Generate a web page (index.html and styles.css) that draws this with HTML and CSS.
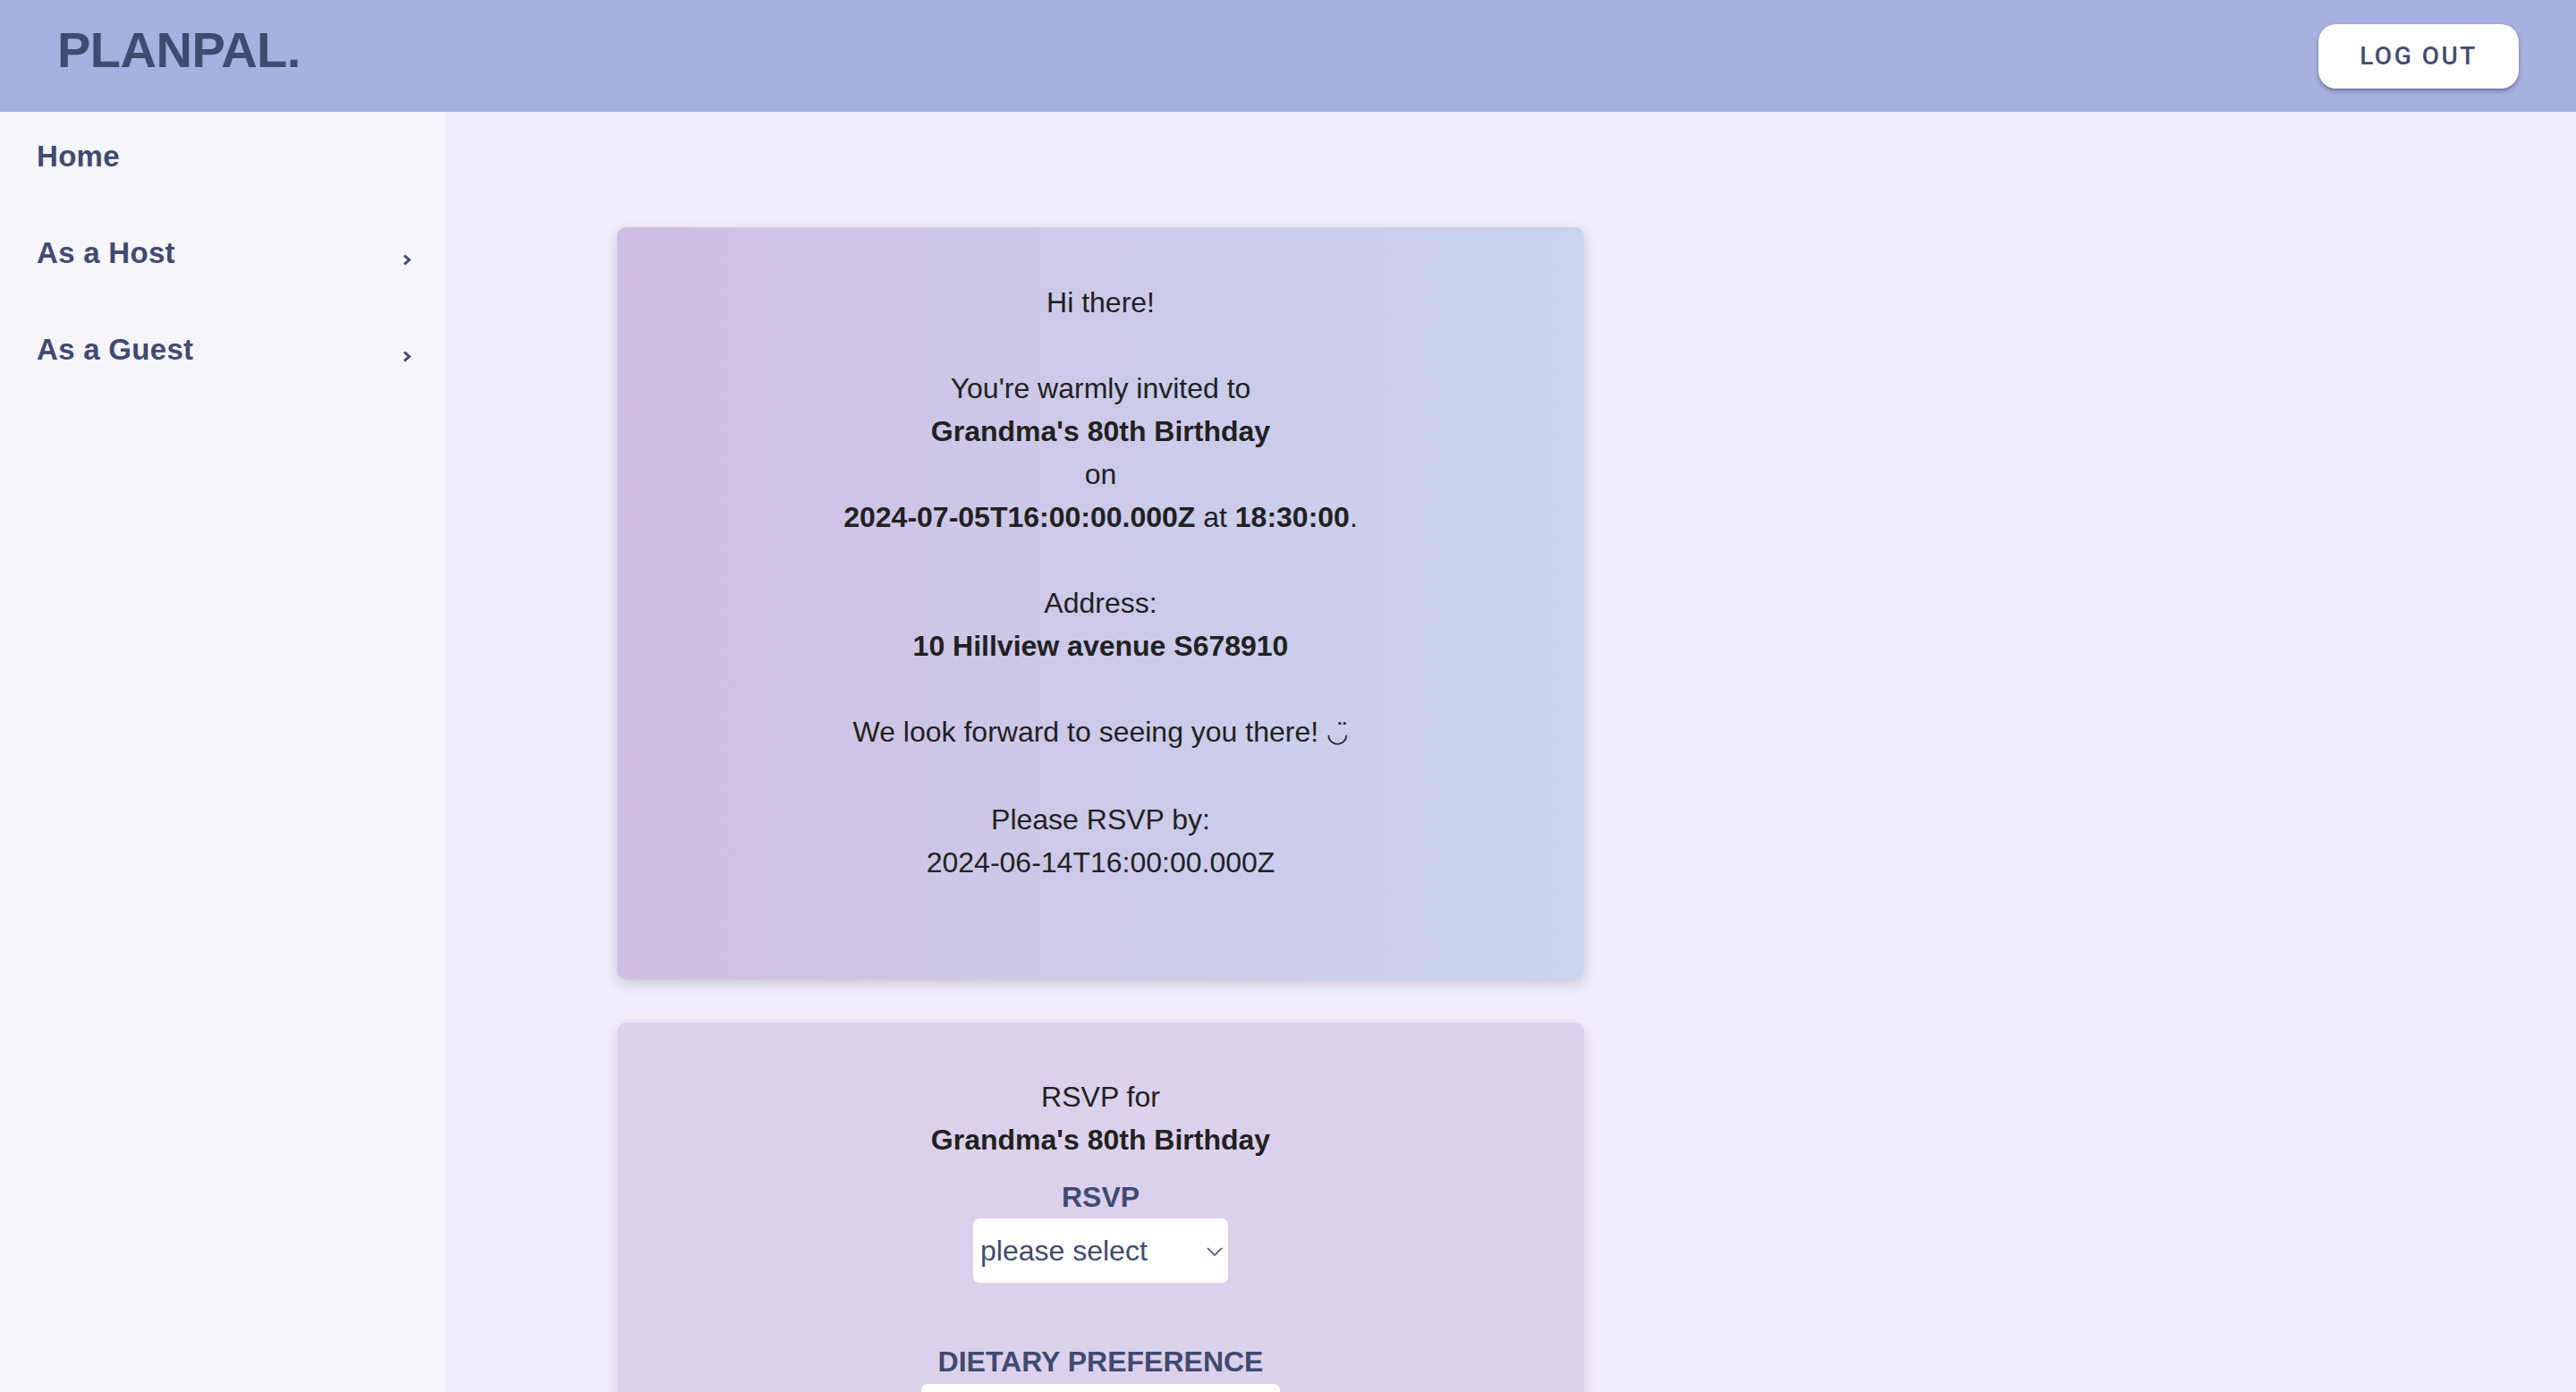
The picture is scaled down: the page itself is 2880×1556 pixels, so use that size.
FILE: index.html
```html
<!DOCTYPE html>
<html lang="en">
<head>
<meta charset="utf-8">
<title>PlanPal</title>
<link rel="stylesheet" href="styles.css">
</head>
<body>
<header class="topbar">
  <div class="logo">PLANPAL.</div>
  <button class="logout">LOG OUT</button>
</header>
<div class="layout">
  <nav class="sidebar">
    <a class="nav-item">Home</a>
    <a class="nav-item">As a Host
      <svg class="chev" width="10" height="13" viewBox="0 0 10 13"><path d="M2 1.5 L7.5 6.5 L2 11.5" fill="none" stroke="#414a70" stroke-width="3"/></svg>
    </a>
    <a class="nav-item">As a Guest
      <svg class="chev" width="10" height="13" viewBox="0 0 10 13"><path d="M2 1.5 L7.5 6.5 L2 11.5" fill="none" stroke="#414a70" stroke-width="3"/></svg>
    </a>
  </nav>
  <main class="main">
    <section class="card invite">
      <p>Hi there!</p>
      <p>You're warmly invited to<br><b>Grandma's 80th Birthday</b><br>on<br><b>2024-07-05T16:00:00.000Z</b> at <b>18:30:00</b>.</p>
      <p>Address:<br><b>10 Hillview avenue S678910</b></p>
      <p>We look forward to seeing you there! <span class="smile">◡̈</span></p>
      <p>Please RSVP by:<br>2024-06-14T16:00:00.000Z</p>
    </section>
    <section class="card rsvp">
      <div class="rsvp-head">RSVP for<br><b>Grandma's 80th Birthday</b></div>
      <label class="field-label rsvp-label">RSVP</label>
      <div class="select-wrap">
        <select class="select"><option>please select</option><option>Attending</option><option>Not attending</option></select>
        <svg class="select-chev" width="18" height="10" viewBox="0 0 18 10"><path d="M1 1 L9 9 L17 1" fill="none" stroke="#414a70" stroke-width="1.6"/></svg>
      </div>
      <label class="field-label diet-label">DIETARY PREFERENCE</label>
      <div class="text-input"></div>
    </section>
  </main>
</div>
</body>
</html>
```
FILE: styles.css
```css
html, body {
  margin: 0;
  padding: 0;
  height: 100%;
  overflow: hidden;
}
body {
  font-family: "Liberation Sans", Arial, Helvetica, sans-serif;
  background: #f0ecfa;
  color: #212121;
}
.topbar {
  height: 125px;
  background: #a7b0de;
  display: flex;
  align-items: center;
  justify-content: space-between;
  padding: 0 64px;
  box-sizing: border-box;
}
.logo {
  font-size: 56px;
  line-height: 56px;
  font-weight: 700;
  color: #414a70;
  margin-bottom: 14px;
  letter-spacing: -0.5px;
}
.logout {
  width: 224px;
  height: 72px;
  border: none;
  border-radius: 20px;
  background: #ffffff;
  color: #414a70;
  font-family: Roboto, "Liberation Sans", sans-serif;
  font-weight: 500;
  font-size: 28px;
  letter-spacing: 2.5px;
  box-shadow: 0 3px 5px rgba(40, 44, 90, 0.35), 0 1px 2px rgba(0,0,0,0.15);
  padding: 0;
  cursor: pointer;
}
.layout {
  display: flex;
  height: calc(100vh - 125px);
}
.sidebar {
  width: 498px;
  flex: none;
  background: #f6f5fa;
  display: flex;
  flex-direction: column;
}
.nav-item {
  display: flex;
  align-items: center;
  justify-content: space-between;
  padding: 26px 38px 34px 41px;
  font-size: 33px;
  line-height: 48px;
  font-weight: 700;
  color: #414a70;
  letter-spacing: 0.3px;
}
.chev {
  margin-top: 14px;
}
.main {
  flex: 1;
  background: #f0ecfa;
  padding: 129px 0 0 192px;
  box-sizing: border-box;
}
.card {
  width: 1081px;
  box-sizing: border-box;
  border-radius: 10px;
  text-align: center;
  font-size: 32px;
  line-height: 48px;
}
.invite {
  background: linear-gradient(to right, #d0bfe3, #c9d4ef);
  box-shadow: 0 5px 14px rgba(60, 50, 90, 0.2);
  padding: 60px 20px 107px;
}
.invite p {
  margin: 48px 0 0;
}
.invite p:first-child {
  margin-top: 0;
}
.smile {
  font-family: "DejaVu Sans", sans-serif;
  font-size: 28px;
}
.rsvp {
  margin-top: 48px;
  background: #dcd1ec;
  box-shadow: 0 5px 14px rgba(60, 50, 90, 0.15);
  padding: 59px 20px 80px;
  display: flex;
  flex-direction: column;
  align-items: center;
}
.field-label {
  display: block;
  font-weight: 700;
  color: #414a70;
  font-size: 32px;
  line-height: 48px;
}
.rsvp-label {
  margin-top: 16px;
}
.select-wrap {
  position: relative;
  width: 285px;
  height: 72px;
}
.select {
  appearance: none;
  -webkit-appearance: none;
  width: 100%;
  height: 100%;
  border: none;
  border-radius: 7px;
  background: #ffffff;
  color: #414a70;
  font-family: "Liberation Sans", Arial, sans-serif;
  font-size: 32px;
  padding: 0 8px;
  box-sizing: border-box;
}
.select-chev {
  position: absolute;
  right: 6px;
  top: 32px;
  pointer-events: none;
}
.diet-label {
  margin-top: 64px;
}
.text-input {
  width: 401px;
  height: 72px;
  border-radius: 7px;
  background: #ffffff;
  margin-top: 1px;
}
```
